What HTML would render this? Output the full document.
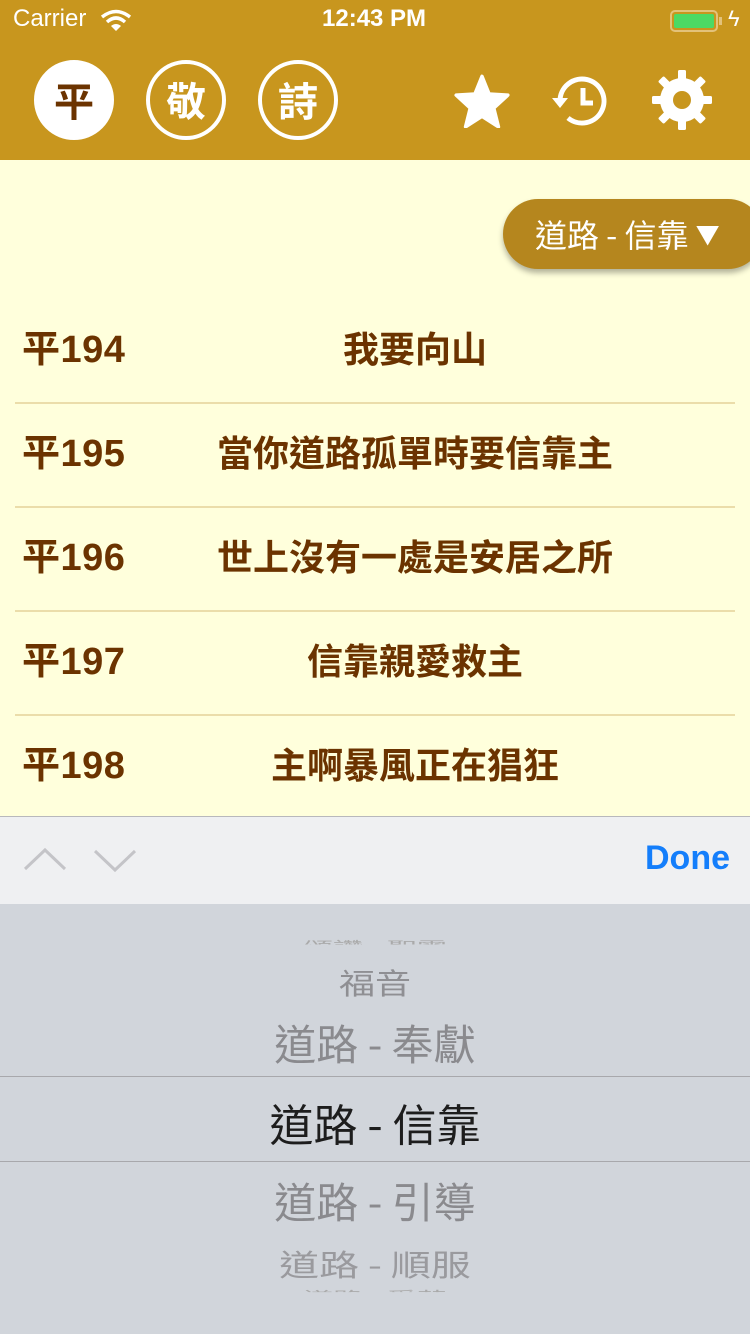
<!DOCTYPE html>
<html><head><meta charset="utf-8"><style>
*{margin:0;padding:0;box-sizing:border-box}
body{width:750px;height:1334px;overflow:hidden;background:#FFFFDC;font-family:"Liberation Sans","Noto Sans CJK TC",sans-serif;position:relative}
.hdr{position:absolute;left:0;top:0;width:750px;height:160px;background:#C8961E;color:#fff}
.abs{position:absolute}
.circ{position:absolute;top:60px;width:80px;height:80px;border-radius:50%;border:4px solid #fff;color:#fff;font-size:40px;line-height:70px;text-align:center;font-weight:bold;font-family:"Noto Sans CJK TC",sans-serif}
.pill{position:absolute;left:503px;top:199px;width:260px;height:70px;border-radius:35px;background:#B5861E;color:#fff;font-size:32px;line-height:70px;padding-left:32px;box-shadow:0 4px 6px rgba(0,0,0,.3);font-family:"Noto Sans CJK TC",sans-serif}
.row{position:absolute;left:15px;width:720px;height:104px;border-bottom:2px solid #EBDDAA;color:#6B3300;font-weight:bold;font-family:"Liberation Sans","Noto Sans CJK TC",sans-serif}
.row .n{position:absolute;left:7px;top:0;line-height:100px;font-size:38px;letter-spacing:0.5px}
.row .t{position:absolute;left:0;right:0;padding-left:80px;text-align:center;line-height:100px;font-size:36px}
.tb{position:absolute;left:0;top:816px;width:750px;height:88px;background:#EFF0F2;border-top:1px solid #B8B8BC}
.pk{position:absolute;left:0;top:904px;width:750px;height:430px;background:#D1D5DB}
.pi{position:absolute;left:0;width:750px;text-align:center;font-family:"Noto Sans CJK TC",sans-serif}
</style></head><body>
<div class="hdr">
 <div class="abs" style="left:13px;top:5px;font-size:24px;">Carrier</div>
 <svg class="abs" style="left:100px;top:9px" width="32" height="24" viewBox="0 0 32 24"><path d="M2 8 Q16 -3 30 8" stroke="#fff" stroke-width="3.5" fill="none"/><path d="M7 13 Q16 5 25 13" stroke="#fff" stroke-width="3.5" fill="none"/><path d="M16 22 L11 17 Q16 13 21 17Z" fill="#fff"/></svg>
 <div class="abs" style="left:322px;top:5px;font-size:24px;font-weight:bold">12:43 PM</div>
 <div class="abs" style="left:670px;top:10px;width:48px;height:22px;border:2px solid #E3C27A;border-radius:5px;padding:2px"><div style="width:100%;height:100%;background:#4CD964;border-radius:2px"></div></div>
 <div class="abs" style="left:719px;top:17px;width:3px;height:8px;background:#E3C27A"></div>
 <div class="abs" style="left:728px;top:6px;font-size:22px">ϟ</div>
 <div class="circ" style="left:34px;background:#fff;color:#6B3300">平</div>
 <div class="circ" style="left:146px">敬</div>
 <div class="circ" style="left:258px">詩</div>
 <svg class="abs" style="left:453px;top:74px" width="58" height="54" viewBox="0 0 24 23"><path d="M12 1 L15 8.5 L23 9 L17 14.5 L19 22.5 L12 18 L5 22.5 L7 14.5 L1 9 L9 8.5Z" fill="#fff" stroke="#fff" stroke-width="1.5" stroke-linejoin="round"/></svg>
 <svg class="abs" style="left:550px;top:72px" width="60" height="58" viewBox="0 0 60 58"><path d="M10 29 A22 22 0 1 1 18 46" stroke="#fff" stroke-width="5" fill="none"/><path d="M2 26 L18 26 L10 36Z" fill="#fff"/><path d="M33 16 V31 H43" stroke="#fff" stroke-width="5" fill="none"/></svg>
 <svg class="abs" style="left:652px;top:70px" width="60" height="60" viewBox="0 0 60 60"><g fill="#fff"><circle cx="30" cy="30" r="22"/><rect x="26" y="0" width="8" height="60" rx="1.5"/><rect x="26" y="0" width="8" height="60" rx="1.5" transform="rotate(45 30 30)"/><rect x="26" y="0" width="8" height="60" rx="1.5" transform="rotate(90 30 30)"/><rect x="26" y="0" width="8" height="60" rx="1.5" transform="rotate(135 30 30)"/></g><circle cx="30" cy="30" r="9" fill="#C8961E"/></svg>
</div>
<div class="pill">道路 - 信靠 <span style="font-size:24px;position:relative;top:-3px">▼</span></div>
<div class="row" style="top:300px"><span class="n">平194</span><span class="t">我要向山</span></div>
<div class="row" style="top:404px"><span class="n">平195</span><span class="t">當你道路孤單時要信靠主</span></div>
<div class="row" style="top:508px"><span class="n">平196</span><span class="t">世上沒有一處是安居之所</span></div>
<div class="row" style="top:612px"><span class="n">平197</span><span class="t">信靠親愛救主</span></div>
<div class="row" style="top:716px;border:none"><span class="n">平198</span><span class="t">主啊暴風正在猖狂</span></div>
<div class="tb">
 <svg class="abs" style="left:22px;top:28px" width="116" height="30" viewBox="0 0 116 30"><path d="M3 24 L23 5 L43 24" stroke="#C4C4C8" stroke-width="3" fill="none"/><path d="M73 6 L93 25 L113 6" stroke="#C4C4C8" stroke-width="3" fill="none"/></svg>
 <div class="abs" style="right:20px;top:22px;font-size:34px;font-weight:bold;color:#147EFB">Done</div>
</div>
<div class="pk">
 <div class="pi" style="top:26px;font-size:30px;color:#aaa;height:20px;overflow:hidden;transform:scaleY(.45)">頌讚 - 聖靈</div>
 <div class="pi" style="top:52px;font-size:36px;color:#8f8f93;transform:scaleY(.8)">福音</div>
 <div class="pi" style="top:108px;font-size:42px;color:#8a8a8e">道路 - 奉獻</div>
 <div class="abs" style="left:0;top:172px;width:750px;height:1px;background:#A8A8AC"></div>
 <div class="pi" style="top:186px;font-size:44px;color:#1d1d1d">道路 - 信靠</div>
 <div class="abs" style="left:0;top:257px;width:750px;height:1px;background:#A8A8AC"></div>
 <div class="pi" style="top:266px;font-size:42px;color:#8a8a8e">道路 - 引導</div>
 <div class="pi" style="top:330px;font-size:40px;color:#9a9a9e;transform:scaleY(.75)">道路 - 順服</div>
 <div class="pi" style="top:378px;font-size:30px;color:#aaa;height:14px;overflow:hidden;transform:scaleY(.45)">道路 - 受苦</div>
</div>
</body></html>
